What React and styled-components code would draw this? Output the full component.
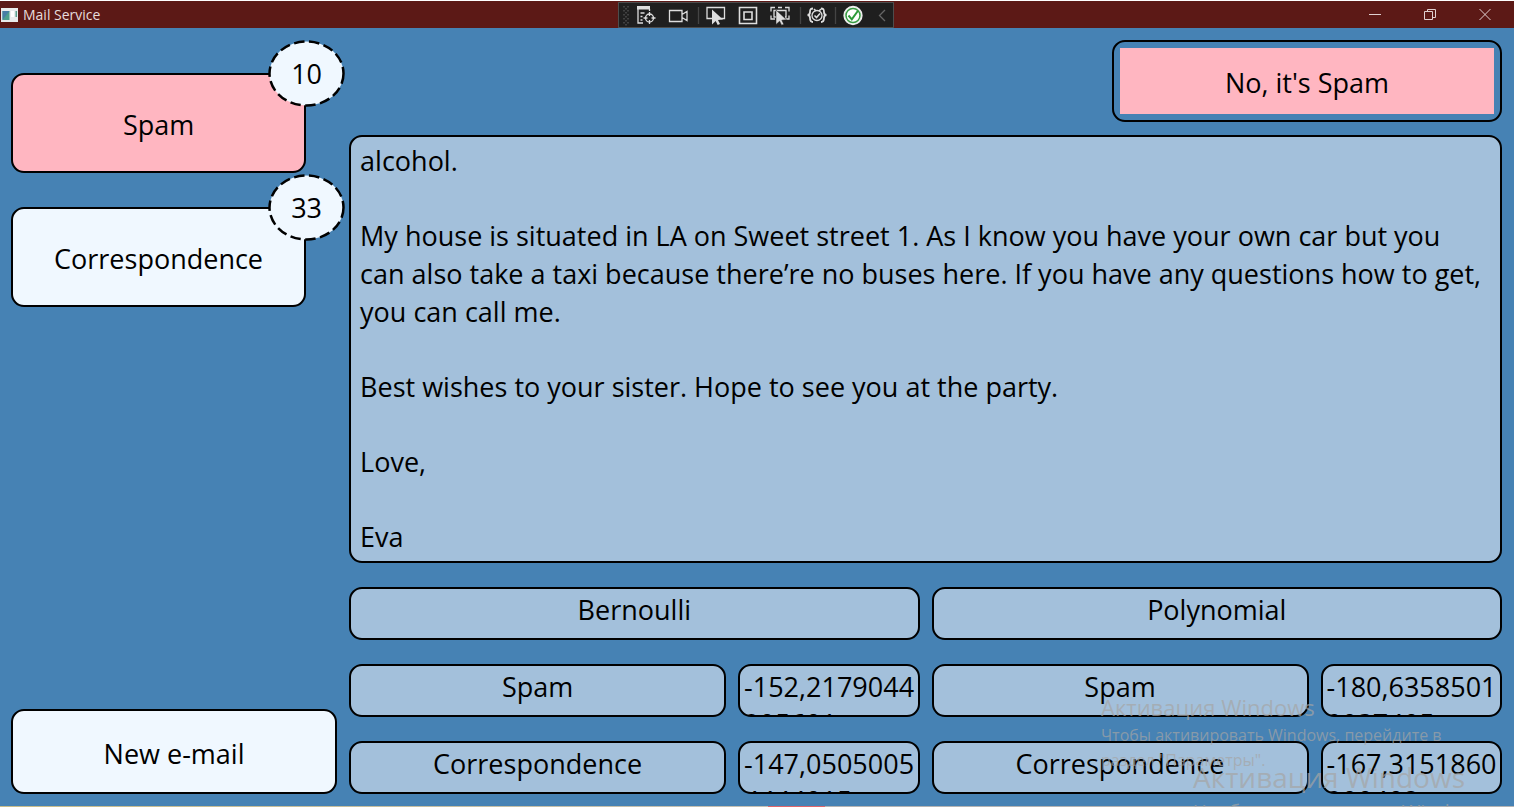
import React from "react";
import styled, { createGlobalStyle, css } from "styled-components";

const GlobalStyle = createGlobalStyle`
  *, *::before, *::after { box-sizing: border-box; }
  html, body, #root { height: 100%; }
  body { margin: 0; overflow: hidden; }
`;

const ink = "#000";
const steel = "#4682b4";
const pale = "#a3c0db";
const alice = "#f0f8ff";
const pink = "#ffb6c1";

const Window = styled.div`
  position: relative;
  display: flex;
  flex-direction: column;
  min-height: 100vh;
  overflow: hidden;
  background: ${steel};
  color: ${ink};
  font: 27px/38px "Open Sans", "Noto Sans", sans-serif;
`;

const TitleBar = styled.header`
  display: grid;
  grid-template-columns: 1fr auto 1fr;
  align-items: center;
  height: 28px;
  padding-right: 2px;
  background: #5c1916;
  border-top: 1px solid #fff;
  color: #e6dcdc;
`;

const AppTitle = styled.h1`
  display: flex;
  align-items: center;
  gap: 5px;
  margin: 0;
  padding-left: 1px;
  font-size: 14px;
  line-height: 26px;
  font-weight: 400;
`;

const DebugBar = styled.div`
  display: flex;
  align-items: center;
  width: 276px;
  height: 26px;
  background: #1f1f1f;
  border: 1px solid #4d4d4d;
`;

const WindowButtons = styled.div`
  display: flex;
  justify-content: flex-end;
`;

const WindowButton = styled.button`
  display: flex;
  align-items: center;
  justify-content: center;
  width: 55px;
  height: 26px;
  padding: 0;
  border: 0;
  background: none;
`;

const Body = styled.main`
  flex: 1;
  display: grid;
  grid-template-columns: minmax(0, 28fr) minmax(0, 99fr);
  gap: 12px;
  padding: 12px 12px 12px 11px;
`;

const TaskbarEdge = styled.div`
  height: 1px;
  background: linear-gradient(90deg, #c9bd8a 0, #c4c0b4 50%, #c4c0b4 768px, #e0666a 768px, #e0666a 825px, #b4b4b4 825px);
`;

const Sidebar = styled.nav`
  display: flex;
  flex-direction: column;
  gap: 34px;
  padding-top: 33px;
`;

const frame = css`
  border: 2px solid ${ink};
  border-radius: 13px;
`;

const Button = styled.button`
  ${frame}
  position: relative;
  height: ${(p) => p.$height}px;
  padding: 4px 0 0;
  background: ${(p) => p.$fill};
  color: inherit;
  font: inherit;
`;

const FolderButton = styled(Button)`
  width: calc(100% - 31px);
`;

const ComposeButton = styled(Button)`
  margin-top: auto;
`;

const Badge = styled.span`
  position: absolute;
  top: -35px;
  right: -41px;
  display: grid;
  place-items: center;
  width: 77px;
  height: 67px;
`;

const BadgeRing = styled.svg`
  position: absolute;
  inset: 0;
`;

const BadgeCount = styled.span`
  position: relative;
`;

const Content = styled.section`
  display: flex;
  flex-direction: column;
`;

const VerdictButton = styled.button`
  ${frame}
  align-self: flex-end;
  width: 390px;
  max-width: 100%;
  height: 82px;
  padding: 6px;
  background: none;
  color: inherit;
  font: inherit;
`;

const VerdictFill = styled.span`
  display: grid;
  place-items: center;
  height: 100%;
  padding-top: 4px;
  background: ${pink};
`;

const Message = styled.article`
  ${frame}
  flex: 1;
  margin: 13px 0 24px;
  padding: 5px 16px 0 9px;
  background: ${pale};
`;

const Paragraph = styled.p`
  margin: 0 0 37px;

  &:last-child { margin-bottom: 0; }
`;

const Results = styled.table`
  display: grid;
  grid-template-columns: 27fr 13fr 27fr 13fr;
  gap: 24px 12px;

  thead, tbody, tr { display: contents; }
`;

const cell = css`
  ${frame}
  min-width: 0;
  height: 53px;
  padding: 2px 4px;
  background: ${pale};
  font-weight: 400;
  text-align: center;
  overflow: hidden;
`;

const Method = styled.th`
  ${cell}
  grid-column: span 2;
`;

const Label = styled.td`
  ${cell}
`;

const Score = styled.td`
  ${cell}
  padding: 2px 0 0 4px;
  line-height: 37px;
  text-align: left;
  word-break: break-all;
`;

const Watermark = styled.div`
  position: absolute;
  left: ${(p) => p.$left};
  top: ${(p) => p.$top}px;
  color: rgba(165, 165, 165, 0.7);
  font-size: ${(p) => p.$size}px;
  line-height: ${(p) => p.$line}px;
  white-space: nowrap;
  pointer-events: none;
`;

const WatermarkTitle = styled.div`
  font-size: ${(p) => p.$size}px;
  line-height: ${(p) => p.$line}px;
`;

const AppIcon = () => (
  <svg width="17" height="14" viewBox="0 0 17 14" aria-hidden="true">
    <rect width="17" height="14" fill="#e9ecec" />
    <rect x="1.5" y="3" width="7" height="9" fill="#4c9f8c" />
    <path d="M1.500 3h7L1.500 12z" fill="#477ea5" />
    <path d="M10 3h3v6h-3z" fill="#fff" />
    <path d="M14.500 3h1.500v6h-1.500z" fill="#5aa08d" />
  </svg>
);

const DebugIcons = () => (
  <svg width="274" height="24" viewBox="0 0 274 24" fill="none" stroke="#dedede" strokeWidth="1.300" aria-hidden="true">
    <g stroke="#555" strokeWidth="1.300" strokeDasharray="1.500 2.500">
      <path d="M5 3v20M9 3v20" />
      <path d="M7 5v18" />
    </g>
    <path d="M18 3h13v3.500H18z" fill="#dedede" stroke="none" />
    <path d="M19 6v14h5M21.500 10h4M21.500 13.500h2M21.500 17h2M30.500 6v2" />
    <circle cx="30.500" cy="15" r="4" />
    <path d="M30.500 9v4M30.500 17v4M24.500 15h4M32.500 15h4" />
    <path d="M50.500 7.500h12.500v11H50.500zM63 11.500l5-3v9l-5-3" />
    <path d="M79.500 4v17M181.500 4v17M216.500 4v17" stroke="#444" />
    <path d="M93 15.500h-5v-11h17.500v11H102" />
    <path d="M93 6.500v15l3.700-3.500 2 4 2.300-1-2-4 5-.500z" fill="#dedede" stroke="none" />
    <path d="M120.500 4.500h17v16h-17zM125 9h8v7.500h-8z" strokeWidth="1.600" />
    <path d="M156 4.500h-4v4M166 4.500h4v4M152 12.500v3.500h4M170 12.500v3.500h-4M157 14H155V7.500h12V14h-1M159 4.500h4" />
    <path d="M157 7v14.500l3.600-3.300 2 4 2.200-1-2-4 4.700-.500z" fill="#dedede" stroke="#1f1f1f" strokeWidth=".5" />
    <path d="M194 5.500c-3 0-3 1.500-3 3.500s-1 3-2.500 3c1.500 0 2.500 1 2.500 3s0 4 3 4M202 5.500c3 0 3 1.500 3 3.500s1 3 2.500 3c-1.500 0-2.500 1-2.500 3s0 4-3 4" strokeWidth="1.800" />
    <circle cx="198" cy="12.500" r="5" />
    <path d="M195.500 12.500l2 2 3.500-4M195 6l2 2M202 6l-2 2" strokeWidth="1.600" />
    <circle cx="234" cy="12.500" r="9" fill="#e9f3e9" stroke="#f0f0f0" />
    <circle cx="234" cy="12.500" r="7" fill="#fff" stroke="#379b42" strokeWidth="1.500" />
    <path d="M229.500 12.500l3.300 3.800 6-8.300" stroke="#2c9a38" strokeWidth="2" />
    <path d="M266 7l-5.500 5.500L266 18" stroke="#666" />
  </svg>
);

const ControlIcon = ({ d }) => (
  <svg width="14" height="14" viewBox="0 0 14 14" fill="none" stroke="#e0d0d0" aria-hidden="true">
    <path d={d} />
  </svg>
);

const controls = [
  { name: "Minimize", d: "M1 6.500h12" },
  { name: "Restore", d: "M1.500 3.500h8v8h-8zM4.500 3.500v-2h8v8h-3" },
  { name: "Close", d: "M1.500 1l11 11M12.500 1l-11 11" },
];

const folders = [
  { name: "Spam", count: 10, fill: pink },
  { name: "Correspondence", count: 33, fill: alice },
];

const results = [
  ["Spam", "-152,2179044905601", "Spam", "-180,63585010037405"],
  ["Correspondence", "-147,05050054444015", "Correspondence", "-167,3151860200402"],
];

const paragraphs = [
  "alcohol.",
  "My house is situated in LA on Sweet street 1. As I know you have your own car but you can also take a taxi because there’re no buses here. If you have any questions how to get, you can call me.",
  "Best wishes to your sister. Hope to see you at the party.",
  "Love,",
  "Eva",
];

export default function App() {
  return (
    <Window>
      <GlobalStyle />
      <TitleBar>
        <AppTitle><AppIcon />Mail Service</AppTitle>
        <DebugBar><DebugIcons /></DebugBar>
        <WindowButtons>
          {controls.map((c) => (
            <WindowButton key={c.name} aria-label={c.name}><ControlIcon d={c.d} /></WindowButton>
          ))}
        </WindowButtons>
      </TitleBar>
      <Body>
        <Sidebar>
          {folders.map((f) => (
            <FolderButton key={f.name} $height={100} $fill={f.fill}>
              {f.name}
              <Badge>
                <BadgeRing viewBox="0 0 77 67" aria-hidden="true">
                  <ellipse cx="38.500" cy="33.500" rx="37" ry="32" fill={alice} stroke={ink} strokeWidth="2.500" strokeDasharray="10.500 4.500" />
                </BadgeRing>
                <BadgeCount>{f.count}</BadgeCount>
              </Badge>
            </FolderButton>
          ))}
          <ComposeButton $height={85} $fill={alice}>New e-mail</ComposeButton>
        </Sidebar>
        <Content>
          <VerdictButton><VerdictFill>No, it's Spam</VerdictFill></VerdictButton>
          <Message>
            {paragraphs.map((text) => <Paragraph key={text}>{text}</Paragraph>)}
          </Message>
          <Results>
            <thead>
              <tr>
                <Method colSpan={2}>Bernoulli</Method>
                <Method colSpan={2}>Polynomial</Method>
              </tr>
            </thead>
            <tbody>
              {results.map(([a, x, b, y]) => (
                <tr key={a}>
                  <Label>{a}</Label>
                  <Score>{x}</Score>
                  <Label>{b}</Label>
                  <Score>{y}</Score>
                </tr>
              ))}
            </tbody>
          </Results>
        </Content>
      </Body>
      <TaskbarEdge />
      <Watermark $left="calc(100% - 413px)" $top={692} $size={16} $line={25}>
        <WatermarkTitle $size={22} $line={31}>Активация Windows</WatermarkTitle>
        Чтобы активировать Windows, перейдите в<br />раздел "Параметры".
      </Watermark>
      <Watermark $left="calc(100% - 321px)" $top={758} $size={20} $line={32}>
        <WatermarkTitle $size={28} $line={38}>Активация Windows</WatermarkTitle>
        Чтобы активировать Windows, перейдите в
      </Watermark>
    </Window>
  );
}
